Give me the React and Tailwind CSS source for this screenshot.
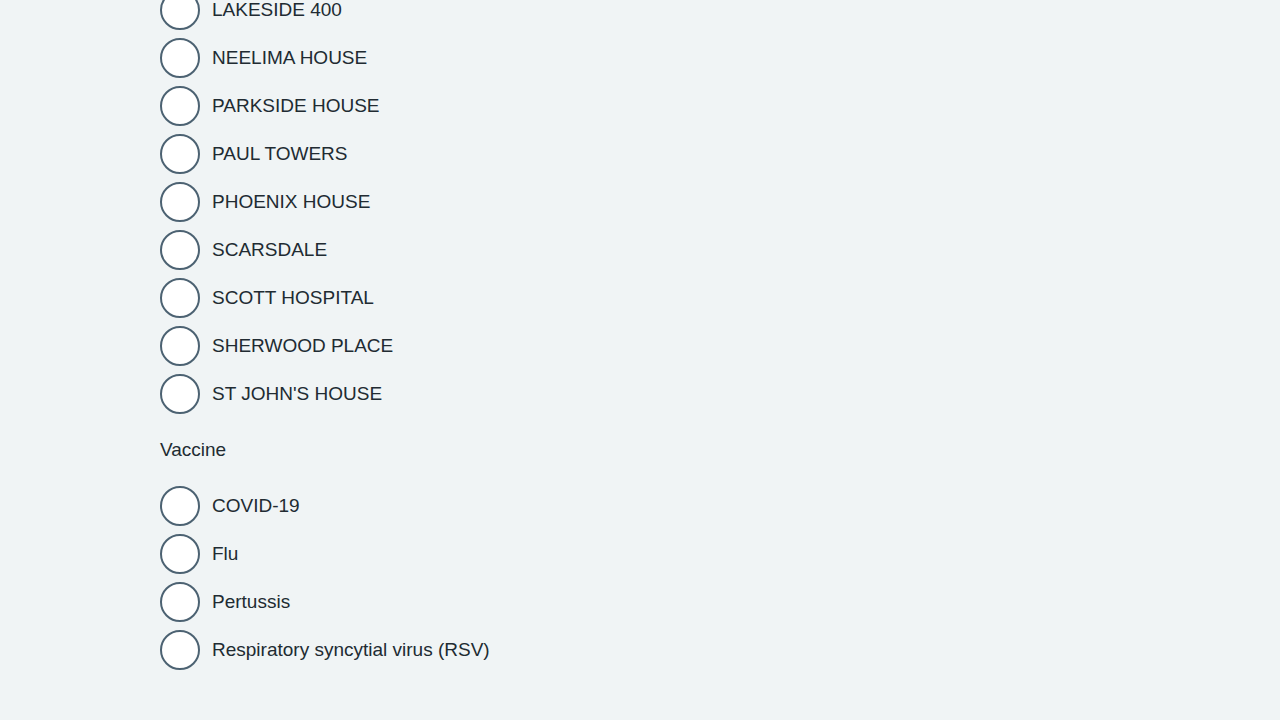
const careHomes = [
  'LAKESIDE 400',
  'NEELIMA HOUSE',
  'PARKSIDE HOUSE',
  'PAUL TOWERS',
  'PHOENIX HOUSE',
  'SCARSDALE',
  'SCOTT HOSPITAL',
  'SHERWOOD PLACE',
  "ST JOHN'S HOUSE",
]

const vaccines = ['COVID-19', 'Flu', 'Pertussis', 'Respiratory syncytial virus (RSV)']

function RadioItem({ label }) {
  return (
    <label className="flex h-10 items-center gap-3 mb-2 cursor-pointer">
      <span className="h-10 w-10 shrink-0 rounded-full border-2 border-[#4c6272] bg-white" />
      <span className="text-[19px] leading-7 text-[#212b32]">{label}</span>
    </label>
  )
}

export default function App() {
  return (
    <div
      className="h-[720px] overflow-hidden bg-[#f0f4f5]"
      style={{ fontFamily: '"Liberation Sans", Arial, sans-serif' }}
    >
      <div className="ml-40 -mt-[10px]">
        <div className="flex flex-col">
          {careHomes.map((home) => (
            <RadioItem key={home} label={home} />
          ))}
        </div>
        <fieldset className="mt-[14px]">
          <legend className="mb-[22px] text-[19px] leading-7 text-[#212b32]">Vaccine</legend>
          {vaccines.map((vaccine) => (
            <RadioItem key={vaccine} label={vaccine} />
          ))}
        </fieldset>
      </div>
    </div>
  )
}
